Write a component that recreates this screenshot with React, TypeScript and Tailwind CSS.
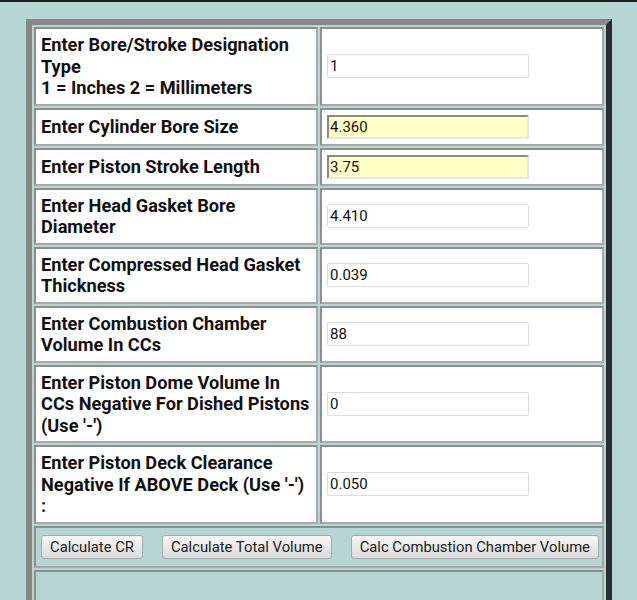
import React from 'react';

type Field = {
  label: React.ReactNode;
  value: string;
  highlight?: boolean;
};

const fields: Field[] = [
  {
    label: (
      <>
        Enter Bore/Stroke Designation Type
        <br />1 = Inches 2 = Millimeters
      </>
    ),
    value: '1',
  },
  { label: 'Enter Cylinder Bore Size', value: '4.360', highlight: true },
  { label: 'Enter Piston Stroke Length', value: '3.75', highlight: true },
  { label: 'Enter Head Gasket Bore Diameter', value: '4.410' },
  { label: 'Enter Compressed Head Gasket Thickness', value: '0.039' },
  { label: 'Enter Combustion Chamber Volume In CCs', value: '88' },
  {
    label: "Enter Piston Dome Volume In CCs Negative For Dished Pistons (Use '-')",
    value: '0',
  },
  {
    label: "Enter Piston Deck Clearance Negative If ABOVE Deck (Use '-') :",
    value: '0.050',
  },
];

const cell =
  'border-2 border-t-[#8e8e8e] border-l-[#8e8e8e] border-r-[#a8a8a8] border-b-[#a8a8a8] py-[5px] align-middle';

const Btn = ({ children }: { children: React.ReactNode }) => (
  <button
    type="button"
    className="shrink-0 whitespace-nowrap h-[24px] px-[8px] mr-[19px] last:mr-0 rounded-[3px] border border-[#a9a9a9] bg-gradient-to-b from-[#f7f7f7] to-[#dcdcdc] text-[14.8px] leading-[20px] text-[#222]"
  >
    {children}
  </button>
);

export default function App() {
  return (
    <div className="min-h-[600px] bg-[#b5d6d3] font-['Roboto','Noto_Sans',sans-serif]">
      <div className="h-[2px] bg-[#1e1e1e]" />
      <div className="pt-[17px] pl-[26px]">
        <table className="w-[586px] table-fixed border-separate border-spacing-[2px] border-[6px] border-t-[#878787] border-l-[#878787] border-r-[#2c2c2c] border-b-[#2c2c2c]">
          <colgroup>
            <col className="w-[284px]" />
            <col />
          </colgroup>
          <tbody>
            {fields.map((f, i) => (
              <tr key={i}>
                <td className={`${cell} pl-[5px] pr-[3px] bg-white text-[18.2px] leading-[21.5px] font-bold text-[#111]`}>
                  {f.label}
                </td>
                <td className={`${cell} px-[5px] bg-white`}>
                  <input
                    readOnly
                    value={f.value}
                    className={
                      f.highlight
                        ? 'block w-[202px] h-[24px] px-[1px] border-2 border-t-[#8a8a8a] border-l-[#8a8a8a] border-r-[#e6e6e6] border-b-[#e6e6e6] bg-[#ffffc6] text-[15px] text-[#111] outline-none'
                        : 'block w-[202px] h-[24px] px-[2px] border border-[#dcdcdc] rounded-[2px] bg-white text-[15px] text-[#111] outline-none'
                    }
                  />
                </td>
              </tr>
            ))}
            <tr>
              <td colSpan={2} className={`${cell} px-[5px] bg-[#b5d6d3] py-[7px]`}>
                <div className="flex">
                  <Btn>Calculate CR</Btn>
                  <Btn>Calculate Total Volume</Btn>
                  <Btn>Calc Combustion Chamber Volume</Btn>
                </div>
              </td>
            </tr>
            <tr>
              <td colSpan={2} className={`${cell} bg-[#b5d6d3] h-[60px]`} />
            </tr>
          </tbody>
        </table>
      </div>
    </div>
  );
}
